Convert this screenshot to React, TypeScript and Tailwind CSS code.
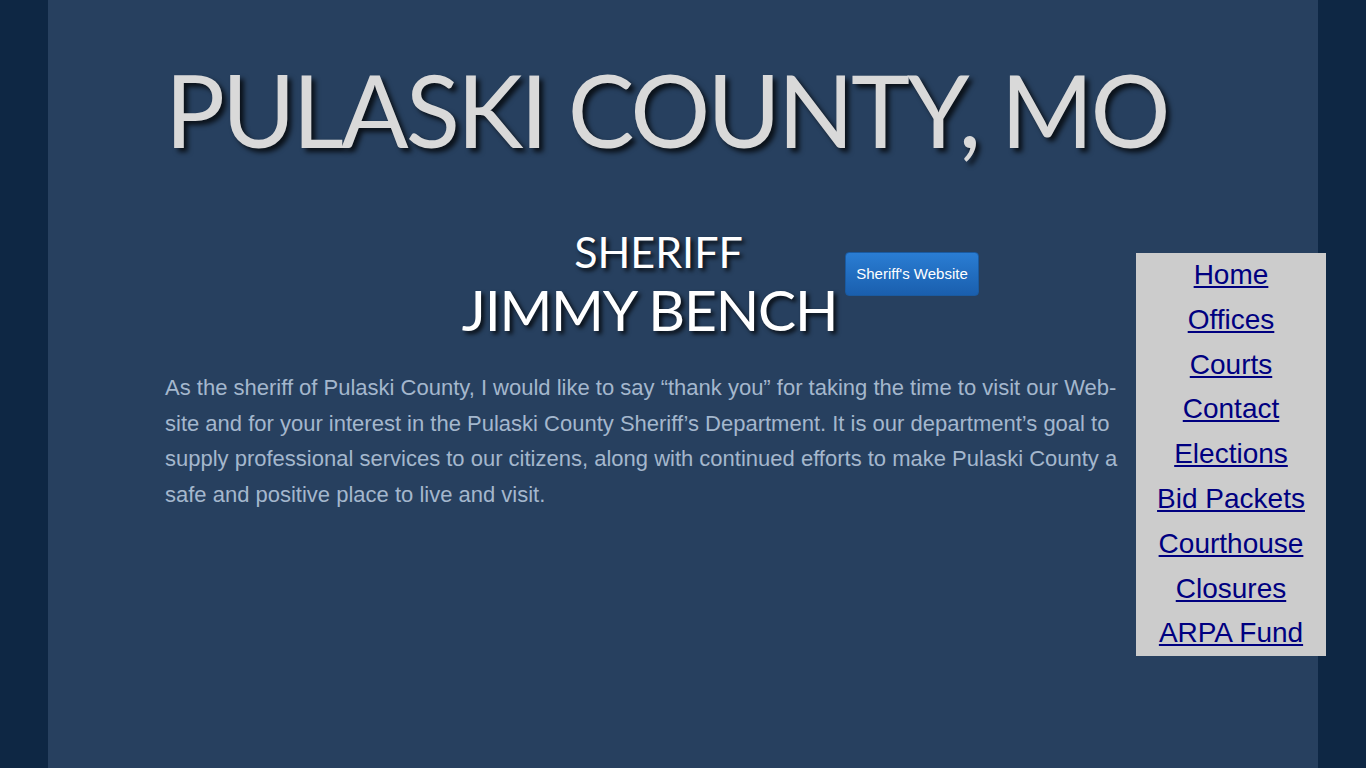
import React from "react";

const links = ["Home", "Offices", "Courts", "Contact", "Elections", "Bid Packets", "Courthouse", "Closures", "ARPA Fund"];

export default function App() {
  return (
    <div className="min-h-[768px] w-full bg-[#0e2744] flex justify-center">
      <div className="w-[1270px] min-h-[768px] bg-[#27405f] pl-[117px] pt-[54px]">
        <h1
          className="text-[#d9d9d9] text-[100px] leading-[110px] tracking-[-3px] whitespace-nowrap"
          style={{ fontFamily: 'Lato, sans-serif', textShadow: "4px 4px 5px rgba(0,0,0,0.75)" }}
        >
          PULASKI COUNTY, MO
        </h1>
        <div className="flex items-start mt-[62px]">
          <div className="w-[965px] shrink-0">
            <div className="grid grid-cols-[1fr_auto_1fr] items-start">
              <div />
              <div
                className="text-white text-center pl-[4px]"
                style={{ fontFamily: 'Lato, sans-serif', textShadow: "3px 3px 4px rgba(0,0,0,0.8)" }}
              >
                <div className="text-[43px] leading-[52px] pl-[18px]">SHERIFF</div>
                <div className="text-[57px] leading-[62px] tracking-[-1.2px]">JIMMY BENCH</div>
              </div>
              <div className="pt-[26px] pl-[8px]">
                <button
                  className="h-[44px] px-[10px] rounded-[4px] text-white text-[15px] bg-gradient-to-b from-[#2a7dd3] to-[#1a5fae] border border-[#1a5aa0]"
                  style={{ fontFamily: '"Liberation Sans", Arial, sans-serif' }}
                >
                  Sheriff's Website
                </button>
              </div>
            </div>
            <p
              className="mt-[30px] text-[22px] leading-[35.5px] text-[#a4b7cd]"
              style={{ fontFamily: '"Liberation Sans", Arial, sans-serif' }}
            >
              As the sheriff of Pulaski County, I would like to say “thank you” for taking the time to visit our Web-site and for your interest in the Pulaski County Sheriff’s Department. It is our department’s goal to supply professional services to our citizens, along with continued efforts to make Pulaski County a safe and positive place to live and visit.
            </p>
          </div>
          <nav
            className="shrink-0 mt-[27px] ml-[6px] w-[190px] h-[403px] bg-[#cccccc] flex flex-col items-center relative z-10"
            style={{ fontFamily: '"Liberation Sans", Arial, sans-serif' }}
          >
            {links.map((l) => (
              <a key={l} href="#" className="text-[#000080] underline text-[28px] leading-[44.8px]">
                {l}
              </a>
            ))}
          </nav>
        </div>
      </div>
    </div>
  );
}
